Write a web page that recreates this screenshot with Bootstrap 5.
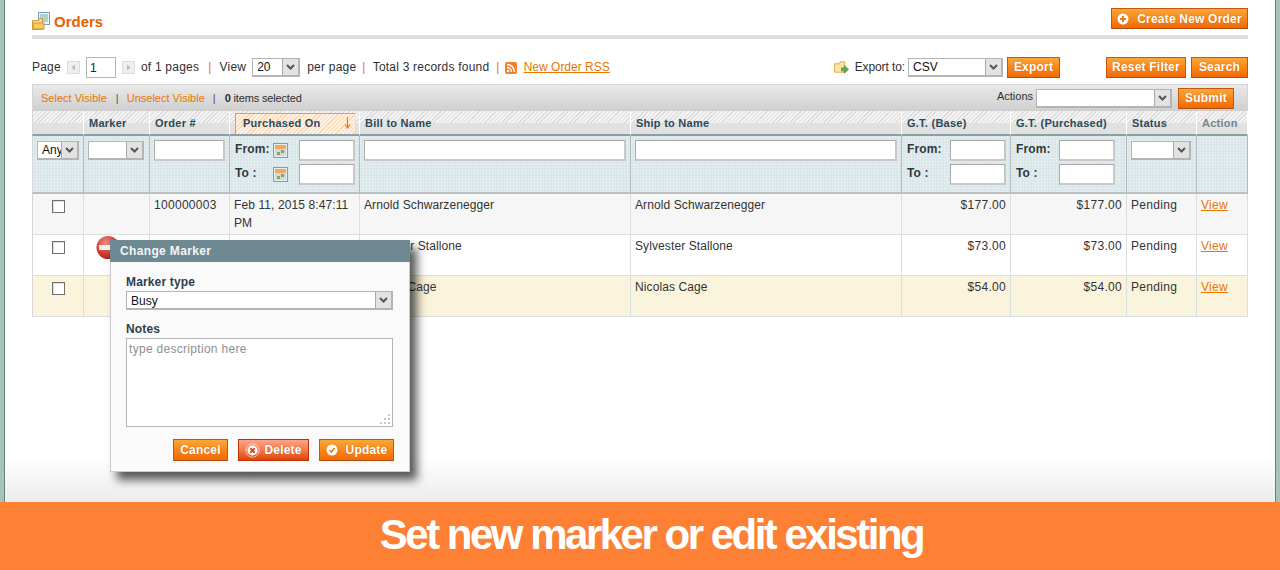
<!DOCTYPE html>
<html lang="en">
<head>
<meta charset="utf-8">
<title>Orders</title>
<link href="https://cdn.jsdelivr.net/npm/bootstrap@5.3.0/dist/css/bootstrap.min.css" rel="stylesheet">
<style>
html,body{height:570px;overflow:hidden;margin:0}
body{font:12px/18px "Liberation Sans",Arial,sans-serif;color:#2f2f2f;background:#fff}
a{color:#ea7601}
.shell{height:570px}
.stage{height:502px;position:relative;border-left:4px solid #a6c4bc;border-right:4px solid #a6c4bc;background:linear-gradient(#fff 458px,#ececec 100%)}
.stage-in{height:100%;border-left:1px solid #5f8580;border-right:1px solid #5f8580;padding:8px 27px 0}
.title-row{height:27px}
.ttl{font-size:15px;line-height:27px;font-weight:700;color:#eb5e00;margin:0 0 0 4px}
.title-row svg.ord{margin-bottom:1px}
.rule{height:4px;background:#ddd}
.pager{height:21px;margin-top:18px;white-space:nowrap;letter-spacing:.22px}
.pager>span:not(.xsel),.pager>a{margin-bottom:2px}
.pager>a{letter-spacing:0}
.pager>.exp-l{letter-spacing:-.1px}
.pager .xbtn,.b-new{padding-bottom:1px}
.sep{color:#ea7601;font-weight:400}
.pg-i{width:30px;height:21px;border:1px solid #b5b5b5;padding:0 3px;font:12px "Liberation Sans",Arial,sans-serif;color:#222;letter-spacing:0}
.txt-i{height:21px;border:solid;border-color:#aaa #c8c8c8 #c8c8c8 #aaa;border-width:1px 2px 2px 1px;padding:0 3px;background:#fff;display:block}
.g3{margin-left:3px}.g4{margin-left:4px}.g5{margin-left:5px}.g6{margin-left:6px}.g7{margin-left:7px}.g8{margin-left:8px}.g9{margin-left:9px}.g10{margin-left:10px}
.push{margin-left:auto}.g46{margin-left:46px}
.xsel{display:inline-flex;height:19px;border:1px solid #b4b4b4;border-width:1px 2px 2px 1px;background:#fff}
.xsel select{appearance:none;-webkit-appearance:none;border:0;background:transparent;padding:0 0 0 4px;font:12px/16px "Liberation Sans",Arial,sans-serif;color:#111;flex:1;min-width:0;outline:0}
.xsel .drop{flex:0 0 16px;background:#e2e2e2;border-left:1px solid #aaa;display:flex;align-items:center;justify-content:center}
.sw48{width:48px}.sw95{width:95px}.sw136{width:136px}.sw42{width:42px}.sw56{width:56px}.sw60{width:60px}
.xbtn{display:inline-flex;align-items:center;justify-content:center;height:21px;padding:0;border:1px solid #c4570b;border-bottom-color:#b24c08;border-radius:0;background:linear-gradient(#fba63a,#f98a1b 45%,#f16a08);color:#fff;font:700 12px/18px "Liberation Sans",Arial,sans-serif;text-shadow:0 0 1px rgba(180,70,0,.7);letter-spacing:.2px}
.b-exp{width:53px}.b-rst{width:80px}.b-srch{width:57px}.b-sub{width:56px}.b-new{width:137px}.b-can{width:55px;height:22px}.b-upd{width:75px;height:22px}.b-del{width:71px;height:22px;border-color:#c13100;background:linear-gradient(#fca487,#f67e53 45%,#db4609)}
.massbar{height:27px;margin-top:6px;border:1px solid #d6d6d6;border-bottom:0;background:linear-gradient(#e9e9e9,#cfcfcf);font-size:11px;padding:0 13px 0 8px}
.massbar a{text-decoration:none;color:#ea7601}
.mb-sep{color:#555}
.sel-count{letter-spacing:-.15px}
.act-l{position:relative;top:-2px}
.grid-t{table-layout:fixed;width:1216px;border-collapse:separate;border-spacing:0;margin:0}
.grid-t th,.grid-t td{padding:4px;border-right:1px solid #dadfe0;border-bottom:1px solid #dadfe0;vertical-align:top;word-wrap:break-word}
.grid-t th:first-child,.grid-t td:first-child{border-left:1px solid #d6d6d6}
.hd th{height:25px;padding:2px 5px 0;font-size:11px;line-height:20px;font-weight:700;color:#2c4a5a;letter-spacing:.25px;border-right:1px solid #fff;border-bottom:2px solid #8e9ea4;background:linear-gradient(#e1e1e1,#e1e1e1) 0 12px/100% 11px no-repeat,repeating-linear-gradient(135deg,#dcdcdc 0 1px,#f3f3f3 1px 3px)}
.hd th.off{color:#76858c}
.hd th.sort-cell{padding:2px 4px 0 5px}
.sort-box{height:21px;border-top:1px solid #aaa;border-left:1px solid #aaa;padding:0 4px 2px 7px;background:repeating-linear-gradient(135deg,#fbd6b0 0 1px,#fff1e2 1px 3px)}
.flt td{height:58px;padding:4px;border-right:1px solid #b2bcbe;border-bottom:2px solid #b8c0c2;background-color:#d8e6e9;background-image:repeating-linear-gradient(0deg,rgba(255,255,255,.22) 0 1px,transparent 1px 3px),repeating-linear-gradient(90deg,rgba(255,255,255,.22) 0 1px,transparent 1px 3px)}
.flt label{font-weight:700;color:#33393b;margin:0 0 0 1px;letter-spacing:.1px;align-self:flex-start;width:38px}
.flt .xsel{display:flex;margin-top:1px}
.rng{height:21px}
.rng+.rng{margin-top:3px}
.rng .txt-i{width:56px;margin-left:auto}
.rng-in{margin-right:7px}
.rows td{height:41px;padding:2px 4px 0;letter-spacing:.3px;color:#333}
.rows td.tt{letter-spacing:.1px}
.r1 td{background:#f6f6f6}.r2 td{background:#fff}.r3 td{background:#fbf4dc}
.grid-t td.cen{padding:6px 0 0}
.chk{appearance:none;-webkit-appearance:none;display:block;margin:0 auto;width:13px;height:13px;border:1px solid #707070;background:#fff;box-shadow:inset 1px 1px 1px #ddd}
.grid-t td.mk{padding:0}
.mk svg{display:block;margin-left:12px}
.dlg{position:absolute;left:106px;top:240px;width:300px;height:232px;background:#fafafa;border:1px solid #ccc;border-top:0;box-shadow:7px 8px 9px rgba(0,0,0,.65)}
.dlg-h{height:22px;margin:0 -1px;padding-left:10px;background:#6f8992;color:#f2f5f6;font-size:12px;line-height:22px;font-weight:700;letter-spacing:.35px}
.dlg-b{padding:11px 16px 0 15px}
.dlg label{display:block;font-weight:700;line-height:18px;color:#2f3e4e;margin:0;letter-spacing:.15px}
.dlg .xsel{display:flex;height:19px}
.dlg .xsel select{padding-top:1px}
.dlg .l2{margin-top:10px}
.note{position:relative;height:89px;border:1px solid #b4b4b4;background:#fff}
.note textarea{display:block;width:100%;height:100%;border:0;resize:none;outline:0;padding:3px 2px 2px;font:12px/15px "Liberation Sans",Arial,sans-serif;letter-spacing:.3px;background:transparent}
.note textarea::placeholder{color:#8f8f8f;opacity:1}
.grip{position:absolute;right:1px;bottom:1px}
.dlg-f{margin:12px -1px 0 0}
.banner{height:68px;background:#fe8034;color:#fff;font-size:42px;font-weight:700;line-height:66px;letter-spacing:-2.5px;padding-left:23px}
</style>
</head>
<body>
<svg width="0" height="0" class="d-none">
  <symbol id="i-cal" viewBox="0 0 15 15"><rect x=".5" y=".5" width="14" height="14" fill="#e6eef6" stroke="#6f9bd8"/><rect x="2" y="2" width="11" height="4" fill="#f9a65a"/><rect x="2" y="6" width="11" height="7" fill="#d5dcd6"/><rect x="4" y="9" width="3" height="3" fill="#6fb45a"/><rect x="8" y="7" width="3" height="3" fill="#6fb45a"/></symbol>
  <symbol id="i-chev" viewBox="0 0 9 6"><path d="M1 1l3.500 3.500L8 1" fill="none" stroke="#555" stroke-width="2"/></symbol>
  <symbol id="i-plus" viewBox="0 0 12 12"><circle cx="6" cy="6" r="5.500" fill="#fff"/><path d="M6 3v6M3 6h6" stroke="#f07a12" stroke-width="2"/></symbol>
</svg>
<div class="shell d-flex flex-column">
  <div class="stage">
    <div class="stage-in">
      <div class="title-row d-flex align-items-start justify-content-between">
        <div class="d-flex align-items-center">
          <svg class="ord" width="18" height="18" viewBox="0 0 18 18"><rect x="6.500" y=".5" width="11" height="12" fill="#e8f2fb" stroke="#6f9fc8"/><path d="M8 3h8M8 5h8M8 7h8M8 9h8" stroke="#7fb08a"/><path d="M.5 8.500h6l1-2h3v11H.5z" fill="#fbdc8c" stroke="#d09a3c"/><rect x="1" y="11" width="11" height="6" fill="#fcc85e" stroke="#d09a3c"/></svg>
          <h3 class="ttl">Orders</h3>
        </div>
        <button class="xbtn b-new" type="button"><svg width="12" height="12" class="me-2"><use href="#i-plus"/></svg>Create New Order</button>
      </div>
      <div class="rule"></div>
      <div class="pager d-flex align-items-center">
        <span>Page</span>
        <svg class="g6" width="13" height="13" viewBox="0 0 13 13"><rect x=".5" y=".5" width="12" height="12" fill="#efefef" stroke="#ddd"/><path d="M8 3.500v6L4.500 6.500z" fill="#bbb"/></svg>
        <input class="pg-i g6" type="text" value="1" aria-label="Page">
        <svg class="g6" width="13" height="13" viewBox="0 0 13 13"><rect x=".5" y=".5" width="12" height="12" fill="#efefef" stroke="#ddd"/><path d="M5 3.500v6l3.500-3z" fill="#bbb"/></svg>
        <span class="g6">of 1 pages</span>
        <span class="sep g9">|</span>
        <span class="g8">View</span>
        <span class="xsel sw48 g6"><select aria-label="View"><option>20</option></select><span class="drop"><svg width="9" height="6"><use href="#i-chev"/></svg></span></span>
        <span class="g7">per page</span>
        <span class="sep g6">|</span>
        <span class="g7">Total 3 records found</span>
        <span class="sep g7">|</span>
        <svg class="g5" width="12" height="12" viewBox="0 0 12 12"><rect width="12" height="12" rx="2" fill="#f47f2a"/><circle cx="3" cy="9" r="1.300" fill="#fff"/><path d="M2 5.500a4.500 4.500 0 0 1 4.500 4.500M2 2.500a7.500 7.500 0 0 1 7.500 7.500" fill="none" stroke="#fff" stroke-width="1.400"/></svg>
        <a class="g7" href="#">New Order RSS</a>
        <svg class="push" width="15" height="15" viewBox="0 0 16 15"><path d="M.5 3.500h5l1-2h5v11H.5z" fill="#fde3a0" stroke="#d8a94a"/><path d="M8 8h3V5.500l4.500 4-4.500 4V11H8z" fill="#6aa84f" stroke="#4a7a3a" stroke-width=".7"/></svg>
        <span class="g6 exp-l">Export to:</span>
        <span class="xsel sw95 g3"><select aria-label="Export to"><option>CSV</option></select><span class="drop"><svg width="9" height="6"><use href="#i-chev"/></svg></span></span>
        <button class="xbtn b-exp g4" type="button">Export</button>
        <button class="xbtn b-rst g46" type="button">Reset Filter</button>
        <button class="xbtn b-srch g5" type="button">Search</button>
      </div>
      <div class="massbar d-flex align-items-center">
        <a href="#">Select Visible</a>
        <span class="mb-sep g9">|</span>
        <a class="g8" href="#">Unselect Visible</a>
        <span class="mb-sep g8">|</span>
        <span class="g9 sel-count"><b>0</b> items selected</span>
        <span class="push act-l">Actions</span>
        <span class="xsel sw136 g3"><select aria-label="Actions"><option></option></select><span class="drop"><svg width="9" height="6"><use href="#i-chev"/></svg></span></span>
        <button class="xbtn b-sub g6" type="button">Submit</button>
      </div>
      <table class="grid-t">
        <colgroup><col style="width:52px"><col style="width:66px"><col style="width:80px"><col style="width:130px"><col style="width:271px"><col style="width:271px"><col style="width:109px"><col style="width:116px"><col style="width:70px"><col style="width:51px"></colgroup>
        <thead>
          <tr class="hd">
            <th></th><th>Marker</th><th>Order #</th>
            <th class="sort-cell"><div class="sort-box d-flex align-items-center justify-content-between"><span>Purchased On</span><svg width="7" height="12" viewBox="0 0 7 12"><path d="M3.500 0v10M1 7.500l2.500 3.500L6 7.500" fill="none" stroke="#ee7a12" stroke-width="1.200"/></svg></div></th>
            <th>Bill to Name</th><th>Ship to Name</th><th>G.T. (Base)</th><th>G.T. (Purchased)</th><th>Status</th><th class="off">Action</th>
          </tr>
          <tr class="flt">
            <td><span class="xsel sw42"><select aria-label="Any"><option>Any</option></select><span class="drop"><svg width="9" height="6"><use href="#i-chev"/></svg></span></span></td>
            <td><span class="xsel sw56"><select aria-label="Marker"><option></option></select><span class="drop"><svg width="9" height="6"><use href="#i-chev"/></svg></span></span></td>
            <td><input class="txt-i w-100" type="text" aria-label="Order"></td>
            <td>
              <div class="rng d-flex align-items-center"><label>From:</label><svg width="15" height="15"><use href="#i-cal"/></svg><input class="txt-i" type="text" aria-label="From"></div>
              <div class="rng d-flex align-items-center"><label>To :</label><svg width="15" height="15"><use href="#i-cal"/></svg><input class="txt-i" type="text" aria-label="To"></div>
            </td>
            <td><input class="txt-i w-100" type="text" aria-label="Bill to"></td>
            <td><input class="txt-i w-100" type="text" aria-label="Ship to"></td>
            <td>
              <div class="rng d-flex align-items-center"><label>From:</label><input class="txt-i" type="text" aria-label="From"></div>
              <div class="rng d-flex align-items-center"><label>To :</label><input class="txt-i" type="text" aria-label="To"></div>
            </td>
            <td>
              <div class="rng rng-in d-flex align-items-center"><label>From:</label><input class="txt-i" type="text" aria-label="From"></div>
              <div class="rng rng-in d-flex align-items-center"><label>To :</label><input class="txt-i" type="text" aria-label="To"></div>
            </td>
            <td><span class="xsel sw60"><select aria-label="Status"><option></option></select><span class="drop"><svg width="9" height="6"><use href="#i-chev"/></svg></span></span></td>
            <td></td>
          </tr>
        </thead>
        <tbody class="rows">
          <tr class="r1"><td class="cen"><input class="chk" type="checkbox" aria-label="Select"></td><td></td><td>100000003</td><td class="tt">Feb 11, 2015 8:47:11 PM</td><td class="tt">Arnold Schwarzenegger</td><td class="tt">Arnold Schwarzenegger</td><td class="text-end">$177.00</td><td class="text-end">$177.00</td><td>Pending</td><td><a href="#">View</a></td></tr>
          <tr class="r2"><td class="cen"><input class="chk" type="checkbox" aria-label="Select"></td><td class="mk"><svg width="24" height="25" viewBox="0 0 24 25"><defs><radialGradient id="rg" cx=".4" cy=".3" r=".8"><stop offset="0" stop-color="#f08a80"/><stop offset=".6" stop-color="#cf3a30"/><stop offset="1" stop-color="#9c1f1a"/></radialGradient></defs><circle cx="12" cy="12.500" r="11.500" fill="url(#rg)"/><rect x="3" y="10" width="18" height="5" fill="#f5efec"/></svg></td><td></td><td></td><td class="tt">Sylvester Stallone</td><td class="tt">Sylvester Stallone</td><td class="text-end">$73.00</td><td class="text-end">$73.00</td><td>Pending</td><td><a href="#">View</a></td></tr>
          <tr class="r3"><td class="cen"><input class="chk" type="checkbox" aria-label="Select"></td><td></td><td></td><td></td><td class="tt">Nicolas Cage</td><td class="tt">Nicolas Cage</td><td class="text-end">$54.00</td><td class="text-end">$54.00</td><td>Pending</td><td><a href="#">View</a></td></tr>
        </tbody>
      </table>
    </div>
    <div class="dlg">
      <div class="dlg-h">Change Marker</div>
      <div class="dlg-b">
        <label>Marker type</label>
        <span class="xsel"><select aria-label="Marker type"><option>Busy</option></select><span class="drop"><svg width="9" height="6"><use href="#i-chev"/></svg></span></span>
        <label class="l2">Notes</label>
        <div class="note"><textarea placeholder="type description here" aria-label="Notes"></textarea>
          <svg class="grip" width="12" height="12" viewBox="0 0 12 12"><path d="M9 1h2v2H9zM5 5h2v2H5zM9 5h2v2H9zM1 9h2v2H1zM5 9h2v2H5zM9 9h2v2H9z" fill="#c8c8c8"/></svg>
        </div>
        <div class="dlg-f d-flex justify-content-end">
          <button class="xbtn b-can" type="button">Cancel</button>
          <button class="xbtn b-del g10" type="button"><svg class="me-1" width="15" height="15" viewBox="0 0 15 15"><circle cx="7.500" cy="7.500" r="6.700" fill="none" stroke="#fff" stroke-opacity=".6"/><circle cx="7.500" cy="7.500" r="5" fill="#fff"/><path d="M5.300 5.300l4.400 4.400M9.700 5.300l-4.400 4.400" stroke="#d8482a" stroke-width="2"/></svg>Delete</button>
          <button class="xbtn b-upd g10" type="button"><svg class="me-2" width="12" height="12" viewBox="0 0 12 12"><circle cx="6" cy="6" r="5.500" fill="#fff"/><path d="M3.500 6l2 2 3-4" fill="none" stroke="#f07a12" stroke-width="1.600"/></svg>Update</button>
        </div>
      </div>
    </div>
  </div>
  <div class="banner text-center">Set new marker or edit existing</div>
</div>
</body>
</html>
